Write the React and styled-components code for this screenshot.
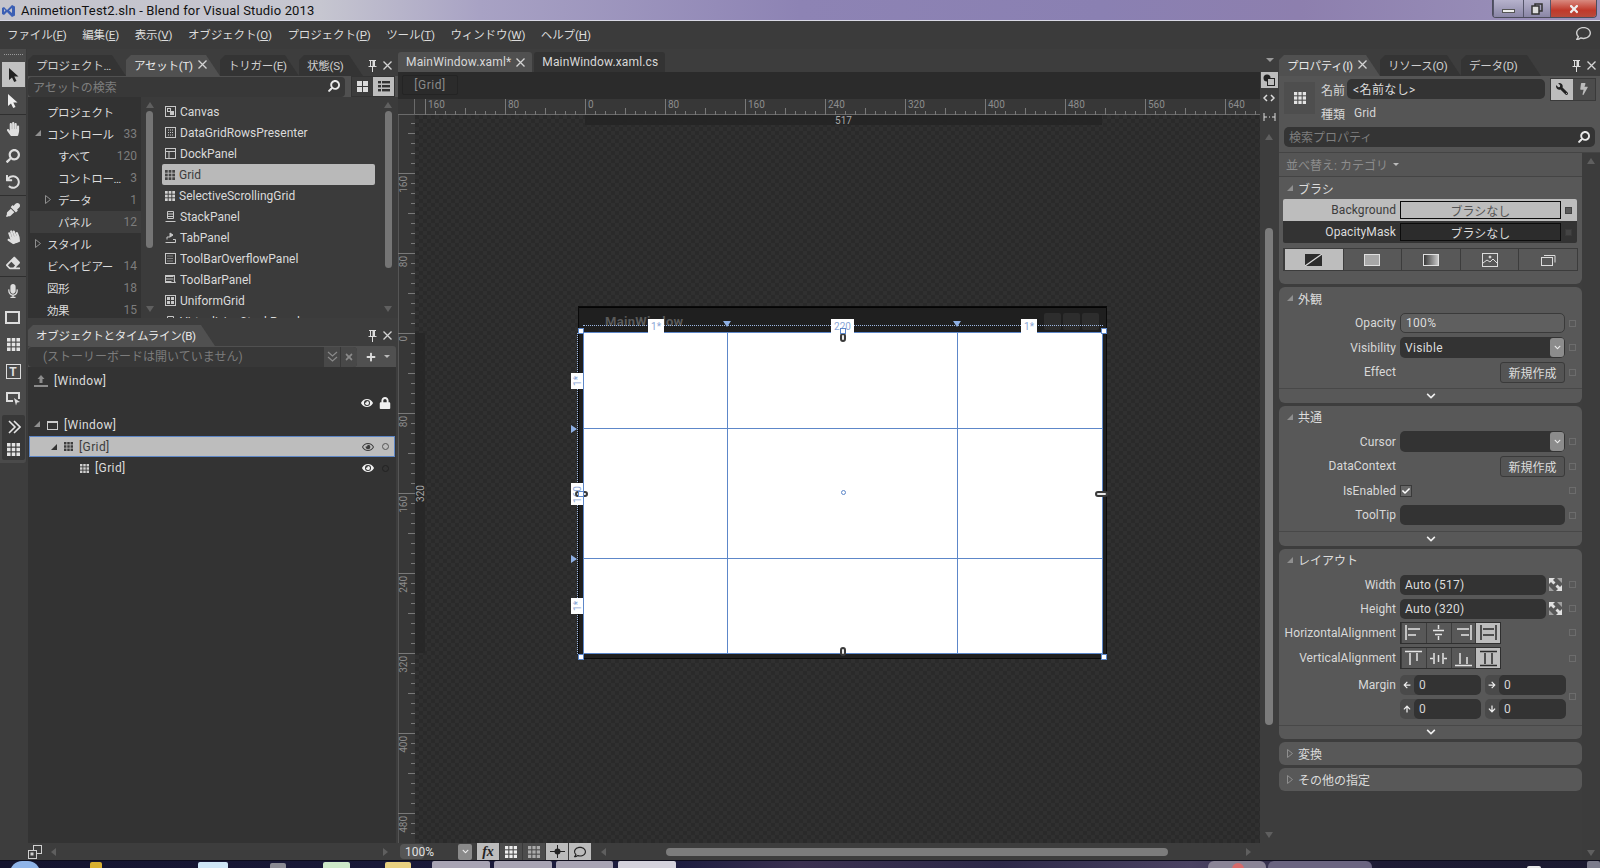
import React from 'react'
import styled, { createGlobalStyle, css } from 'styled-components'
import { FaHandPaper, FaSearch, FaEyeDropper, FaEraser, FaWrench, FaBolt, FaEye, FaLock, FaPlus, FaTimes, FaCheck, FaChevronDown, FaArrowLeft, FaArrowRight, FaArrowUp, FaArrowDown, FaRegComment, FaRegEye, FaUndo, FaMicrophone } from 'react-icons/fa'

const GlobalStyle = createGlobalStyle`
    html, body { margin: 0; padding: 0; height: 100%; overflow: hidden; background: #3c3c3c; }
    body { font-family: Roboto, "Noto Sans CJK JP", sans-serif; font-size: 12px; color: #d6d6d6; }
    * { box-sizing: border-box; }
`

const Page = styled.div`
    width: 1600px;
    height: 868px;
    display: flex;
    flex-direction: column;
    overflow: hidden;
`
const TitleBar = styled.div`
    height: 21px;
    flex: none;
    display: flex;
    align-items: flex-start;
    justify-content: space-between;
    border-bottom: 1px solid #d8d8e4;
    background: linear-gradient(90deg, #c4c4cc 0, #c6c6d0 320px, #a8a2c4 480px, #8d83b4 800px, #8a80b2 1100px, #8d7fae 1300px, #9c93bb 1600px);
`
const TitleLeft = styled.div`
    display: flex;
    align-items: center;
    height: 20px;
    gap: 4px;
    color: #111;
    font-size: 13px;
    letter-spacing: 0.16px;
`
const WindowControls = styled.div`
    display: flex;
    height: 18px;
    margin-right: 3px;
    border: 1px solid #4c4c5c;
    border-top: none;
    border-radius: 0 0 4px 4px;
    overflow: hidden;
`
const WindowButton = styled.div`
    width: ${p => p.$w}px;
    display: flex;
    align-items: center;
    justify-content: center;
    border-left: 1px solid #55556a;
    background: ${p => p.$close ? 'linear-gradient(#d98a80, #c0392b 60%, #b84a3c)' : 'linear-gradient(#b6b2cc, #8a86a6)'};
`
const MinBar = styled.div`
    width: 13px;
    height: 4px;
    margin-top: 4px;
    background: #eee;
    border: 1px solid #555;
`
const MenuBar = styled.div`
    height: 28px;
    flex: none;
    display: flex;
    align-items: center;
    justify-content: space-between;
    padding: 0 9px 3px 7px;
    background: #3b3b3b;
`
const MenuList = styled.div`
    display: flex;
    gap: 15.5px;
`
const MenuItem = styled.span`
    font-size: 11.5px;
    letter-spacing: -0.1px;
    color: #dcdcdc;
`
const Main = styled.div`
    flex: 1;
    display: flex;
    min-height: 0;
    background: #3d3d3d;
`
const Rail = styled.div`
    width: 28px;
    flex: none;
    display: flex;
    flex-direction: column;
`
const RailTools = styled.div`
    width: 27px;
    height: 414px;
    padding: 12px 0 0;
    background: #4a4a4a;
    border-right: 1px solid #3a3a3a;
    border-radius: 0 0 3px 0;
    position: relative;
`
const Grip = styled.div`
    position: absolute;
    top: 5px;
    left: 4px;
    width: 19px;
    border-top: 1px dotted #999;
`
const RailButton = styled.div`
    height: ${p => p.$h || 27}px;
    width: 26px;
    display: flex;
    align-items: center;
    justify-content: center;
    color: #dedede;
    font-size: 14px;
    ${p => p.$active && css`
        margin-top: 1px;
        height: 25px;
        margin-bottom: 1px;
        margin-left: 2px;
        width: 23px;
        background: #c2c2c2;
        color: #222;
    `}
    ${p => p.$sep && css`
        border-bottom: 1px solid #2f2f2f;
    `}
`
const RailGroup = styled.div`
    margin: 3px 1px 0 2px;
    width: 23px;
    height: 45px;
    background: #383838;
    border-radius: 2px;
    padding-top: 1px;
    ${RailButton} {
        width: 23px;
    }
`
const TextTool = styled.span`
    width: 15px;
    height: 15px;
    display: flex;
    align-items: center;
    justify-content: center;
    border: 1.5px solid #ddd;
    font-size: 12px;
    font-weight: 700;
    line-height: 1;
`
const LeftColumn = styled.div`
    width: 370px;
    flex: none;
    display: flex;
    flex-direction: column;
`
const TabStrip = styled.div`
    height: ${p => p.$h || 27}px;
    flex: none;
    display: flex;
    align-items: flex-end;
    gap: ${p => p.$gap ?? 0}px;
`
const Tab = styled.div`
    height: 21px;
    width: ${p => p.$w}px;
    flex: none;
    display: flex;
    align-items: center;
    gap: 5px;
    padding: 0 0 2px 8px;
    font-size: 11.5px;
    letter-spacing: -0.25px;
    white-space: nowrap;
    color: ${p => p.$active ? '#e8e8e8' : '#cfcfcf'};
    background: ${p => p.$active ? '#505050' : '#343434'};
    clip-path: polygon(0 5px, 5px 0, calc(100% - 14px) 0, 100% 100%, 0 100%);
`
const PaneButtons = styled.div`
    margin-left: auto;
    display: flex;
    align-items: center;
    gap: 6px;
    height: 21px;
    padding-right: ${p => p.$r ?? 6}px;
`
const SearchRow = styled.div`
    height: 21px;
    flex: none;
    display: flex;
    align-items: center;
    gap: 6px;
    padding: 0 3px 0 0;
    background: #505050;
`
const SearchBox = styled.div`
    flex: 1;
    height: 20px;
    display: flex;
    align-items: center;
    justify-content: space-between;
    padding: 0 5px 1px;
    background: #383838;
    border-radius: 4px;
    color: #7e7e7e;
    font-size: 12px;
`
const SearchIcon = styled(FaSearch)`
    color: #e8e8e8;
    font-size: 12px;
    transform: scaleX(-1);
`
const FlippedSearch = styled(FaSearch)`
    transform: scaleX(-1);
`
const TiltedHand = styled(FaHandPaper)`
    transform: rotate(-20deg);
`
const ViewToggle = styled.div`
    display: flex;
    border: 1px solid #333;
`
const ViewButton = styled.div`
    width: 21px;
    height: 19px;
    display: flex;
    align-items: center;
    justify-content: center;
    background: ${p => p.$on ? '#bdbdbd' : '#3c3c3c'};
`
const AssetsBody = styled.div`
    height: 221px;
    flex: none;
    display: flex;
    background: #3b3b3b;
`
const Tree = styled.div`
    width: 113px;
    flex: none;
    overflow: hidden;
    padding: 4px 0 0 2px;
    background: #323232;
`
const TreeRow = styled.div`
    height: 22px;
    display: flex;
    align-items: center;
    position: relative;
    padding-left: ${p => p.$indent}px;
    padding-right: 4px;
    font-size: 11.5px;
    letter-spacing: -0.4px;
    white-space: nowrap;
    color: #dcdcdc;
    ${p => p.$selected && css`
        background: #3e3e3e;
    `}
`
const Expander = styled.span`
    position: absolute;
    left: ${p => p.$x}px;
    top: 7px;
    width: 0;
    height: 0;
    border-left: 6px solid transparent;
    border-bottom: 6px solid ${p => p.$c || '#8f8f8f'};
`
const ClosedExpander = styled.span`
    position: absolute;
    left: ${p => p.$x}px;
    top: 4px;
`
const Count = styled.span`
    margin-left: auto;
    letter-spacing: 0;
    font-size: 12px;
    color: #7d7d7d;
`
const VScroll = styled.div`
    width: ${p => p.$w}px;
    flex: none;
    display: flex;
    flex-direction: column;
    align-items: center;
    justify-content: space-between;
    padding: 5px 0 6px;
`
const ArrowUp = styled.div`
    width: 0;
    height: 0;
    flex: none;
    border-left: 4px solid transparent;
    border-right: 4px solid transparent;
    border-bottom: 6px solid #5f5f5f;
`
const ArrowDown = styled(ArrowUp)`
    border-bottom: none;
    border-top: 6px solid #5f5f5f;
`
const Thumb = styled.div`
    width: 7px;
    height: ${p => p.$h}px;
    margin-top: 3px;
    margin-bottom: auto;
    border-radius: 4px;
    background: #757575;
`
const AssetList = styled.div`
    flex: 1;
    overflow: hidden;
    padding: 4px 0 0 4px;
`
const AssetRow = styled.div`
    width: 213px;
    height: 21px;
    display: flex;
    align-items: center;
    gap: 4px;
    padding-left: 3px;
    border-radius: 2px;
    font-size: 12px;
    color: ${p => p.$selected ? '#3c3c3c' : '#dadada'};
    background: ${p => p.$selected ? '#b9b9b9' : 'transparent'};
`
const ObjectsPane = styled.div`
    flex: 1;
    display: flex;
    flex-direction: column;
    min-height: 0;
`
const StoryRow = styled.div`
    height: 21px;
    flex: none;
    display: flex;
    align-items: center;
    gap: 9px;
    padding-right: 6px;
    background: #505050;
    border-radius: 3px 3px 0 0;
    margin-right: 2px;
`
const StoryBox = styled.div`
    flex: 1;
    height: 20px;
    display: flex;
    align-items: center;
    justify-content: space-between;
    padding-left: 15px;
    background: #383838;
    border-radius: 4px;
    color: #7c7c7c;
    overflow: hidden;
`
const StoryText = styled.span`
    margin-top: -3px;
`
const StoryButtons = styled.div`
    display: flex;
    height: 100%;
    color: #8a8a8a;
    font-size: 11px;
`
const StoryButton = styled.div`
    width: 16px;
    margin-left: 1px;
    display: flex;
    align-items: center;
    justify-content: center;
    background: #484848;
`
const StoryActions = styled.div`
    display: flex;
    align-items: center;
    gap: 8px;
    color: #ddd;
    font-size: 10px;
`
const SmallCaret = styled.span`
    width: 0;
    height: 0;
    border-left: 3px solid transparent;
    border-right: 3px solid transparent;
    border-top: 3px solid #bbb;
`
const ObjectTree = styled.div`
    flex: 1;
    background: #333333;
    margin-right: 2px;
    padding-top: 3px;
`
const ObjectRow = styled.div`
    height: ${p => p.$selected ? 21 : 22}px;
    display: flex;
    align-items: center;
    gap: 6px;
    position: relative;
    margin-left: ${p => p.$selected ? 1 : 0}px;
    margin-right: 1px;
    padding-left: ${p => p.$indent - (p.$selected ? 1 : 0)}px;
    padding-right: ${p => p.$selected ? 3 : 4}px;
    font-size: 12px;
    letter-spacing: 0.4px;
    color: ${p => p.$selected ? '#3c3c3c' : '#dcdcdc'};
    ${p => p.$selected && css`
        background: #bdbdbd;
        border: 1px solid #5d85c4;
    `}
`
const RowIcons = styled.div`
    margin-left: auto;
    display: flex;
    align-items: center;
    gap: 6px;
    font-size: 12px;
    color: ${p => p.$dark ? '#3c3c3c' : '#f0f0f0'};
`
const DotMark = styled.span`
    width: 7px;
    height: 7px;
    margin: 0 2px;
    border-radius: 50%;
    border: 1px solid ${p => p.$c};
`
const FootBar = styled.div`
    height: 17px;
    flex: none;
    display: flex;
    align-items: center;
    background: #3d3d3d;
`
const FootArrows = styled.div`
    flex: 1;
    display: flex;
    justify-content: space-between;
    padding: 0 10px 0 9px;
`
const ArrowLeftSmall = styled.div`
    width: 0;
    height: 0;
    border-top: 4px solid transparent;
    border-bottom: 4px solid transparent;
    border-right: 5px solid ${p => p.$c || '#5f5f5f'};
`
const ArrowRightSmall = styled.div`
    width: 0;
    height: 0;
    margin-left: ${p => p.$ml || 0}px;
    border-top: 4px solid transparent;
    border-bottom: 4px solid transparent;
    border-left: 5px solid ${p => p.$c || '#5f5f5f'};
`
const CenterColumn = styled.div`
    flex: 1;
    min-width: 0;
    display: flex;
    flex-direction: column;
`
const DocTab = styled.div`
    height: 20px;
    display: flex;
    align-items: center;
    gap: 5px;
    padding: 0 7px 0 8px;
    border-radius: 3px 3px 0 0;
    font-size: 12px;
    letter-spacing: 0.15px;
    color: #d8d8d8;
    background: ${p => p.$active ? '#505050' : '#333333'};
`
const Breadcrumb = styled.div`
    height: 27px;
    flex: none;
    padding: 3px 0 0 4px;
    background: #2b2b2b;
`
const CrumbButton = styled.div`
    width: 56px;
    height: 20px;
    display: flex;
    align-items: center;
    justify-content: center;
    border: 1px solid #242424;
    border-radius: 2px;
    color: #8a8a8a;
    font-size: 12px;
    letter-spacing: 0.5px;
`
const RulerTop = styled.svg`
    display: block;
    flex: none;
    background: #373737;
`
const Workspace = styled.div`
    flex: 1;
    display: flex;
    min-height: 0;
`
const RulerLeft = styled.svg`
    display: block;
    flex: none;
    background: #373737;
`
const Canvas = styled.div`
    flex: 1;
    position: relative;
    overflow: hidden;
    background-color: #2d2d2d;
    background-image: repeating-conic-gradient(#303030 0 25%, #2a2a2a 0 50%);
    background-size: 8px 8px;
`
const SizeBarH = styled.div`
    position: absolute;
    left: 170px;
    top: 0;
    width: 517px;
    height: 10px;
    display: flex;
    align-items: center;
    justify-content: center;
    background: #252525;
    color: #a8a8a8;
    font-size: 10px;
`
const SizeBarV = styled.div`
    position: absolute;
    left: 0;
    top: 218px;
    width: 10px;
    height: 320px;
    display: flex;
    align-items: center;
    justify-content: center;
    background: #272727;
    color: #a8a8a8;
    font-size: 10px;
`
const Vertical = styled.span`
    writing-mode: vertical-rl;
    transform: rotate(180deg);
`
const Artboard = styled.div`
    position: absolute;
    left: 164px;
    top: 192px;
    width: 527px;
    height: 351px;
    background: #1f1f1f;
    border-top: 1px solid #050505;
    box-shadow: 0 0 0 1px #0a0a0a;
`
const WinTitle = styled.div`
    position: absolute;
    left: 26px;
    top: 6px;
    color: #5a5a5a;
    font-size: 13px;
    font-weight: 700;
    letter-spacing: 0.3px;
`
const WinButton = styled.div`
    position: absolute;
    top: 5px;
    left: ${p => p.$x}px;
    width: 17px;
    height: 17px;
    background: #2d2d2d;
    border-radius: 2px;
`
const Surface = styled.div`
    position: absolute;
    left: 4px;
    top: 24px;
    width: 520px;
    height: 322px;
    background: #fff;
    border: 1px solid #5d87c9;
`
const GridLineV = styled.div`
    position: absolute;
    top: 0;
    bottom: 0;
    left: ${p => p.$x}px;
    width: 1px;
    background: #5d87c9;
`
const GridLineH = styled.div`
    position: absolute;
    left: 0;
    right: 0;
    top: ${p => p.$y}px;
    height: 1px;
    background: #5d87c9;
`
const DottedH = styled.div`
    position: absolute;
    left: 4px;
    width: 520px;
    top: 17px;
    border-top: 1px dotted #9db8e4;
`
const DottedV = styled.div`
    position: absolute;
    left: -2px;
    top: 25px;
    height: 321px;
    border-left: 1px dotted #9db8e4;
`
const SizeLabel = styled.div`
    position: absolute;
    left: ${p => p.$x}px;
    top: ${p => p.$y}px;
    width: ${p => p.$w}px;
    height: ${p => p.$h}px;
    display: flex;
    align-items: center;
    justify-content: center;
    background: #fff;
    color: #8ba6d6;
    font-size: 10px;
`
const Handle = styled.div`
    position: absolute;
    left: ${p => p.$x - 3}px;
    top: ${p => p.$y - 3}px;
    width: 6px;
    height: 6px;
    background: #fff;
    border: 1px solid #5d87c9;
`
const Grabber = styled.div`
    position: absolute;
    left: ${p => p.$x}px;
    top: ${p => p.$y}px;
    width: ${p => p.$w}px;
    height: ${p => p.$h}px;
    border-radius: 3px;
    background: #e8e8e8;
    border: 2px solid #3a3a3a;
`
const TriDown = styled.div`
    position: absolute;
    left: ${p => p.$x - 4}px;
    top: 13px;
    width: 0;
    height: 0;
    border-left: 4px solid transparent;
    border-right: 4px solid transparent;
    border-top: 6px solid #8fb0e4;
`
const TriRight = styled.div`
    position: absolute;
    left: -8px;
    top: ${p => p.$y - 4}px;
    width: 0;
    height: 0;
    border-top: 4px solid transparent;
    border-bottom: 4px solid transparent;
    border-left: 6px solid #8fb0e4;
`
const CenterDot = styled.div`
    position: absolute;
    left: 257px;
    top: 157px;
    width: 5px;
    height: 5px;
    border-radius: 50%;
    border: 1px solid #5d87c9;
`
const ZoomBox = styled.div`
    width: 24px;
    height: 15px;
    margin-left: 2px;
    display: flex;
    align-items: center;
    padding-left: 5px;
    border-radius: 4px;
    background: #555;
    color: #e0e0e0;
    font-size: 12px;
    white-space: nowrap;
`
const ZoomDrop = styled.div`
    width: 14px;
    height: 16px;
    margin-left: 34px;
    display: flex;
    align-items: center;
    justify-content: center;
    border-radius: 2px;
    background: #8a8a8a;
    color: #eee;
    font-size: 7px;
`
const ViewTools = styled.div`
    display: flex;
    margin-left: 4px;
    margin-right: 10px;
`
const ViewTool = styled.div`
    width: 23px;
    height: 17px;
    display: flex;
    align-items: center;
    justify-content: center;
    background: ${p => p.$on ? '#bcbcbc' : '#4c4c4c'};
    color: ${p => p.$on ? '#222' : '#eee'};
    font-family: "Liberation Serif", serif;
    font-style: italic;
    font-weight: 700;
    font-size: 14px;
    border-left: 1px solid #3a3a3a;
`
const HThumb = styled.div`
    width: 502px;
    height: 8px;
    margin-left: 60px;
    border-radius: 4px;
    background: #7c7c7c;
`
const SideStrip = styled.div`
    width: 18px;
    flex: none;
    margin-top: 23px;
    display: flex;
    flex-direction: column;
    align-items: center;
    position: relative;
    background: #3d3d3d;
    padding-bottom: 22px;
`
const SideButton = styled.div`
    width: 17px;
    height: ${p => p.$h}px;
    display: flex;
    align-items: center;
    justify-content: center;
    background: ${p => p.$on ? '#bdbdbd' : 'transparent'};
`
const SideCaret = styled.span`
    position: absolute;
    right: 4px;
    top: -14px;
    width: 0;
    height: 0;
    border-left: 4px solid transparent;
    border-right: 4px solid transparent;
    border-top: 4px solid #999;
`
const SideUp = styled(ArrowUp)`
    margin-top: 9px;
`
const SideDown = styled(ArrowDown)`
    margin-top: auto;
`
const SideThumb = styled.div`
    width: 8px;
    height: 497px;
    margin-top: 88px;
    border-radius: 4px;
    background: #7c7c7c;
`
const RightColumn = styled.div`
    width: 322px;
    flex: none;
    display: flex;
    flex-direction: column;
    padding-left: 1px;
`
const HeadBlock = styled.div`
    height: 77px;
    flex: none;
    display: flex;
    flex-direction: column;
    background: #555555;
    padding: 2px 5px 0;
    border-bottom: 1px solid #444;
`
const NameArea = styled.div`
    display: flex;
    height: 45px;
`
const TypeTile = styled.div`
    width: 31px;
    height: 32px;
    margin-top: 4px;
    flex: none;
    display: flex;
    align-items: center;
    justify-content: center;
    background: #4e4e4e;
`
const NameFields = styled.div`
    flex: 1;
    min-width: 0;
    padding-left: 6px;
`
const NameRow = styled.div`
    display: flex;
    align-items: center;
    height: 22px;
    gap: ${p => p.$gap}px;
    margin-bottom: 2px;
    white-space: nowrap;
`
const NameInput = styled.div`
    width: 198px;
    height: 20px;
    flex: none;
    display: flex;
    align-items: center;
    padding: 0 0 2px 6px;
    border-radius: 5px;
    background: #333;
    color: #dcdcdc;
    letter-spacing: 0.4px;
`
const ModeButtons = styled.div`
    display: flex;
    flex: none;
    margin-left: 3px;
    border: 1px solid #3a3a3a;
`
const ModeButton = styled.div`
    width: 22px;
    height: 21px;
    display: flex;
    align-items: center;
    justify-content: center;
    font-size: 12px;
    color: ${p => p.$on ? '#222' : '#bbb'};
    background: ${p => p.$on ? '#bdbdbd' : '#4c4c4c'};
`
const FlippedWrench = styled(FaWrench)`
    transform: scaleX(-1);
`
const PropSearch = styled(SearchBox)`
    flex: none;
    height: 20px;
    margin-top: 4px;
    border-radius: 5px;
    background: #343434;
`
const PropBody = styled.div`
    flex: 1;
    display: flex;
    min-height: 0;
`
const Sections = styled.div`
    width: 303px;
    flex: none;
    display: flex;
    flex-direction: column;
`
const SortRow = styled.div`
    height: 24px;
    flex: none;
    display: flex;
    align-items: center;
    gap: 5px;
    padding-left: 7px;
    background: #555555;
    color: #8d8d8d;
    border-bottom: 1px solid #444;
`
const Section = styled.div`
    flex: none;
    margin-bottom: 3px;
    background: #585858;
    border-radius: ${p => p.$flat ? '0 0 6px 6px' : '6px'};
    overflow: hidden;
`
const SectionTitle = styled.div`
    height: ${p => p.$h || 22}px;
    display: flex;
    align-items: center;
    gap: 5px;
    padding-left: 8px;
    color: #dcdcdc;
    font-size: 12px;
`
const TinyOpen = styled.span`
    width: 0;
    height: 0;
    border-left: 6px solid transparent;
    border-bottom: 6px solid #8f8f8f;
`
const BrushRow = styled.div`
    width: 294px;
    height: 22px;
    margin-left: 4px;
    display: grid;
    grid-template-columns: 113px 161px 8px;
    column-gap: 4px;
    align-items: center;
    background: ${p => p.$on ? '#bdbdbd' : '#333'};
    color: ${p => p.$on ? '#3c3c3c' : '#dcdcdc'};
    border-radius: ${p => p.$on ? '2px 2px 0 0' : '0 0 2px 2px'};
`
const BrushLabel = styled.span`
    text-align: right;
    letter-spacing: 0.1px;
`
const BrushSwatch = styled.div`
    height: 18px;
    display: flex;
    align-items: center;
    justify-content: center;
    border: 1px solid #0c0c0c;
    background: ${p => p.$on ? '#bdbdbd' : '#2c2c2c'};
    color: ${p => p.$on ? '#555' : '#dcdcdc'};
`
const BrushDot = styled.span`
    width: 7px;
    height: 7px;
    background: ${p => p.$on ? '#5a5a5a' : '#444'};
    border: 1px solid ${p => p.$on ? '#444' : '#3a3a3a'};
`
const BrushTabs = styled.div`
    width: 295px;
    height: 23px;
    margin: 5px 0 13px 4px;
    display: grid;
    grid-template-columns: repeat(5, 1fr);
    border: 1px solid #3c3c3c;
`
const BrushTab = styled.div`
    display: flex;
    align-items: center;
    justify-content: center;
    background: ${p => p.$on ? '#bdbdbd' : 'transparent'};
    border-left: 1px solid #3c3c3c;
`
const PropRows = styled.div`
    padding-top: 2px;
`
const PropRow = styled.div`
    height: ${p => p.$h || 24.5}px;
    display: grid;
    grid-template-columns: 117px 165px 7px;
    column-gap: 4px;
    align-items: center;
`
const PropLabel = styled.span`
    text-align: right;
    white-space: nowrap;
    color: #d8d8d8;
    font-size: 12px;
    letter-spacing: 0.1px;
`
const Marker = styled.span`
    width: 7px;
    height: 7px;
    border: 1px solid #6c6c6c;
    ${p => p.$tall && css`
        transform: translateY(12px);
    `}
`
const Field = styled.div`
    height: 20px;
    display: flex;
    align-items: center;
    padding-left: 5px;
    border-radius: 5px;
    color: #dcdcdc;
    letter-spacing: 0.3px;
    background: ${p => p.$light ? '#5f5f5f' : '#333'};
    border: ${p => p.$light ? '1px solid #3a3a3a' : 'none'};
`
const SelectField = styled(Field)`
    height: 21px;
    padding-right: 1px;
    justify-content: space-between;
`
const SelectCaret = styled.span`
    width: 14px;
    height: 19px;
    display: flex;
    align-items: center;
    justify-content: center;
    border-radius: 3px;
    background: #8c8c8c;
    color: #eee;
    font-size: 7px;
`
const NewButton = styled.div`
    width: 65px;
    height: 21px;
    margin-left: auto;
    display: flex;
    align-items: center;
    justify-content: center;
    border: 1px solid #3a3a3a;
    border-radius: 3px;
    color: #dcdcdc;
    background: #545454;
`
const CheckBox = styled.span`
    width: 12px;
    height: 12px;
    display: flex;
    align-items: center;
    justify-content: center;
    border: 1px solid #3a3a3a;
    background: #666;
    color: #fff;
    font-size: 8px;
`
const SizeEditor = styled.div`
    display: flex;
    align-items: center;
    justify-content: space-between;
    padding-right: 3px;
`
const SizeField = styled(Field)`
    width: 146px;
`
const AlignGroup = styled.div`
    width: 101px;
    height: 22px;
    display: grid;
    grid-template-columns: repeat(4, 1fr);
    border: 1px solid #2f2f2f;
`
const AlignCell = styled.div`
    display: flex;
    align-items: center;
    justify-content: center;
    background: ${p => p.$on ? '#bdbdbd' : 'transparent'};
    border-left: 1px solid #3c3c3c;
`
const MarginGrid = styled.div`
    display: grid;
    grid-template-columns: 81px 81px;
    column-gap: 4px;
`
const MarginCell = styled.div`
    height: 20px;
    display: flex;
    border-radius: 5px;
    overflow: hidden;
    background: #4a4a4a;
`
const MarginArrow = styled.div`
    width: 14px;
    display: flex;
    align-items: center;
    justify-content: center;
    color: #eee;
    font-size: 8px;
`
const MarginInput = styled.div`
    flex: 1;
    display: flex;
    align-items: center;
    padding-left: 5px;
    border-radius: 5px;
    background: #333;
`
const MoreRow = styled.div`
    height: ${p => p.$h || 15}px;
    margin-top: ${p => p.$mt || 0}px;
    display: flex;
    align-items: center;
    justify-content: center;
    border-top: 1px solid #484848;
    color: #eee;
    font-size: 10px;
`
const PropScroll = styled.div`
    flex: 1;
    padding: 5px 0 4px;
    display: flex;
    flex-direction: column;
    align-items: center;
    justify-content: space-between;
    background: #3c3c3c;
`
const Taskbar = styled.div`
    height: 8px;
    flex: none;
    position: relative;
    overflow: hidden;
    background: linear-gradient(90deg, #14142e 0, #1d1d40 680px, #3a3050 800px, #2c2848 1000px, #4a4262 1190px, #1d1b34 1380px, #1b1a30 1600px);
    border-top: 1px solid #0d0d1c;
`
const TaskItem = styled.div`
    position: absolute;
    left: ${p => p.$x}px;
    width: ${p => p.$w}px;
    top: ${p => p.$t ?? 0}px;
    height: 12px;
    border-radius: ${p => p.$r ?? 2}px ${p => p.$r ?? 2}px 0 0;
    background: ${p => p.$c};
`

const Cursor = ({ filled = true, c = '#222' }) => (
    <svg width="12" height="16" viewBox="0 0 12 16"><path d="M1 1 L1 13 L4 10.5 L6.2 15 L8.5 14 L6.3 9.5 L10.5 9.5 Z" fill={filled ? c : '#eee'} /></svg>
)

const Pin = () => (
    <svg width="9" height="12" viewBox="0 0 9 12" fill="none" stroke="#ddd"><path d="M1 .5h7M2.500 .5v6M6.500 .5v6M.5 6.500h8M4.500 6.500V12" /><rect x="4.500" y="1" width="2" height="5" fill="#ddd" stroke="none" /></svg>
)

const Cross = ({ c = '#d4d4d4' }) => (
    <svg width="9" height="9" viewBox="0 0 9 9" stroke={c} strokeWidth="1.300"><path d="M.5 .5l8 8M8.500 .5l-8 8" /></svg>
)

const OutlineArrow = () => (
    <svg width="6" height="9" viewBox="0 0 6 9" fill="none" stroke="#8f8f8f"><path d="M.5 .5l5 4-5 4z" /></svg>
)

const Dots = ({ c = '#dcdcdc', s = 11 }) => (
    <svg width={s} height={s} viewBox="0 0 11 11" fill={c}>
        {[0, 4, 8].map(y => [0, 4, 8].map(x => <rect key={`${x}-${y}`} x={x} y={y} width="3" height="3" />))}
    </svg>
)

const TwoByTwo = ({ c }) => (
    <svg width="11" height="11" viewBox="0 0 11 11" fill={c}>
        <rect width="5" height="5" /><rect x="6" width="5" height="5" /><rect y="6" width="5" height="5" /><rect x="6" y="6" width="5" height="5" />
    </svg>
)

const ListIcon = ({ c }) => (
    <svg width="12" height="11" viewBox="0 0 12 11" fill={c}>
        {[0, 4, 8].map(y => <g key={y}><rect y={y} width="3" height="2.400" /><rect x="4" y={y} width="8" height="2.400" /></g>)}
    </svg>
)

const ExpandIcon = () => (
    <svg width="13" height="13" viewBox="0 0 13 13">
        <path d="M0 0h6L4 2l2.500 2.500-2 2L2 4 0 6zM13 13H7l2-2-2.500-2.500 2-2L11 9l2-2z" fill="#e0e0e0" />
        <path d="M8 0h5v5zM0 8l5 5H0z" fill="#a0a0a0" />
    </svg>
)

const DoubleChevron = () => (
    <svg width="11" height="11" viewBox="0 0 11 11" fill="none" stroke="#8a8a8a" strokeWidth="1.200"><path d="M1 1l4.500 4L10 1M1 6l4.500 4L10 6" /></svg>
)

const AssetIcon = ({ kind, c = '#c8c8c8' }) => {
    const common = { width: 11, height: 11, viewBox: '0 0 11 11', fill: 'none', stroke: c, strokeWidth: 1 }
    if (kind === 'grid') return <Dots c={c === '#c8c8c8' ? '#d0d0d0' : c} s={10} />
    if (kind === 'canvas') return <svg {...common}><rect x=".5" y=".5" width="10" height="10" /><rect x="2.500" y="2.500" width="3" height="3" /><rect x="5.500" y="5.500" width="3" height="3" fill={c} /></svg>
    if (kind === 'rows') return <svg {...common}><rect x=".5" y=".5" width="10" height="10" /><path d="M3 3h5M3 5.500h5M3 8h5" strokeDasharray="1 1" /></svg>
    if (kind === 'dock') return <svg {...common}><rect x=".5" y=".5" width="10" height="10" /><path d="M.5 3.500h10M4 3.500v7" /></svg>
    if (kind === 'stack') return <svg {...common}><path d="M2.500 .5h6v7h-6zM2.500 3h6M2.500 5.500h6M.5 10.500h10" /></svg>
    if (kind === 'tab') return <svg {...common}><path d="M.5 10.500h10V7.500H8M2 7.500V5h3" /><path d="M5 1l3 2-3 2z" fill={c} /></svg>
    if (kind === 'overflow') return <svg {...common}><rect x=".5" y=".5" width="10" height="10" /><path d="M2.500 3h6M2.500 5.500h6M2.500 8h6" strokeDasharray="1 1" /></svg>
    if (kind === 'toolbar') return <svg {...common}><path d="M.5 2.500h8M.5 5h8M.5 7.500h6M9 6l1.500 3" /><rect x=".5" y="1.500" width="9" height="7" /></svg>
    return <svg {...common}><rect x=".5" y=".5" width="10" height="10" /><rect x="2.500" y="2.500" width="2" height="2" fill={c} /><rect x="6.500" y="2.500" width="2" height="2" fill={c} /><rect x="2.500" y="6.500" width="2" height="2" fill={c} /><rect x="6.500" y="6.500" width="2" height="2" fill={c} /></svg>
}

const ticks = (from, to) => {
    const out = []
    for (let u = from; u <= to; u += 10) out.push(u)
    return out
}

const HorizontalRuler = () => {
    const origin = 187
    const marks = ticks(-160, 670)
    return (
        <RulerTop width="862" height="16" viewBox="0 0 862 16">
            <line x1="0" x2="862" y1="15.500" y2="15.500" stroke="#6a6a6a" />
            <line x1="16.500" x2="16.500" y1="0" y2="16" stroke="#6a6a6a" />
            {marks.map(u => {
                const major = u % 80 === 0
                const h = major ? 16 : u % 40 === 0 ? 7 : 4
                return <line key={u} x1={origin + u + 0.5} x2={origin + u + 0.5} y1={16 - h} y2="16" stroke="#787878" />
            })}
            {marks.filter(u => u % 80 === 0).map(u => (
                <text key={u} x={origin + u + 3} y="9" fill="#8c8c8c" fontSize="10" fontFamily="Roboto, sans-serif">{Math.abs(u)}</text>
            ))}
        </RulerTop>
    )
}

const VerticalRuler = () => {
    const origin = 218
    const marks = ticks(-210, 500)
    return (
        <RulerLeft width="17" height="728" viewBox="0 0 17 728">
            <line x1="0.5" x2="0.5" y1="0" y2="728" stroke="#555" />
            {marks.map(u => {
                const major = u % 80 === 0
                const w = major ? 17 : u % 40 === 0 ? 7 : 4
                return <line key={u} x1={17 - w} x2="17" y1={origin + u + 0.5} y2={origin + u + 0.5} stroke="#787878" />
            })}
            {marks.filter(u => u % 80 === 0).map(u => (
                <text key={u} transform={`translate(9 ${origin + u + 3 + String(Math.abs(u)).length * 5.6}) rotate(-90)`} fill="#8c8c8c" fontSize="10" fontFamily="Roboto, sans-serif">{Math.abs(u)}</text>
            ))}
        </RulerLeft>
    )
}

const BrushIcon = ({ kind }) => {
    if (kind === 0) return <svg width="17" height="12" viewBox="0 0 17 12"><rect width="17" height="12" fill="#2c2c2c" /><path d="M0 12 L17 0" stroke="#dcdcdc" strokeWidth="1.200" /></svg>
    if (kind === 1) return <svg width="16" height="12" viewBox="0 0 16 12"><rect x=".5" y=".5" width="15" height="11" fill="#a8a8a8" stroke="#e0e0e0" /></svg>
    if (kind === 2) return <svg width="16" height="12" viewBox="0 0 16 12"><defs><linearGradient id="gr"><stop offset="0" stopColor="#333" /><stop offset="1" stopColor="#ccc" /></linearGradient></defs><rect x=".5" y=".5" width="15" height="11" fill="url(#gr)" stroke="#e0e0e0" /></svg>
    if (kind === 3) return <svg width="16" height="14" viewBox="0 0 16 14" fill="none" stroke="#dcdcdc"><rect x=".5" y=".5" width="15" height="13" /><path d="M1 10l4-3 3 2 3-3 4 4" /><circle cx="8" cy="4" r="1" fill="#dcdcdc" /></svg>
    return <svg width="15" height="12" viewBox="0 0 15 12" fill="none" stroke="#dcdcdc"><rect x=".5" y="3.500" width="11" height="8" /><path d="M3 1.500h11v7" /></svg>
}

const AlignIcon = ({ d, dark }) => (
    <svg width="19" height="17" viewBox="0 0 19 17" fill="none" stroke={dark ? '#2a2a2a' : '#e4e4e4'} strokeWidth="1.500"><path d={d} /></svg>
)

const horizontalIcons = [
    'M2 1v15M4 5h12M4 11h8',
    'M9.500 1v4M9.500 12v4M4 6.500h11M6 10.500h7',
    'M17 1v15M3 5h12M7 11h8',
    'M2 1v15M17 1v15M4 5h11M4 11h11',
]
const verticalIcons = [
    'M1 1.500h17M6 3v12M13 3v8',
    'M5 3v11M9.500 5v7M14 3v11M1 8.500h3M15 8.500h3',
    'M1 15.500h17M6 14V3M13 14V7',
    'M1 1.500h17M1 15.500h17M6 3v11M13 3v11',
]

const menus = [['ファイル', 'F'], ['編集', 'E'], ['表示', 'V'], ['オブジェクト', 'O'], ['プロジェクト', 'P'], ['ツール', 'T'], ['ウィンドウ', 'W'], ['ヘルプ', 'H']]

const categories = [
    { label: 'プロジェクト', indent: 17 },
    { label: 'コントロール', indent: 17, count: 33, open: true, ax: 5 },
    { label: 'すべて', indent: 28, count: 120 },
    { label: 'コントロー…', indent: 28, count: 3 },
    { label: 'データ', indent: 28, count: 1, closed: true, ax: 15 },
    { label: 'パネル', indent: 28, count: 12, selected: true },
    { label: 'スタイル', indent: 17, closed: true, ax: 5 },
    { label: 'ビヘイビアー', indent: 17, count: 14 },
    { label: '図形', indent: 17, count: 18 },
    { label: '効果', indent: 17, count: 15 },
]

const assets = [
    ['Canvas', 'canvas'], ['DataGridRowsPresenter', 'rows'], ['DockPanel', 'dock'], ['Grid', 'grid'],
    ['SelectiveScrollingGrid', 'grid'], ['StackPanel', 'stack'], ['TabPanel', 'tab'], ['ToolBarOverflowPanel', 'overflow'],
    ['ToolBarPanel', 'toolbar'], ['UniformGrid', 'uniform'], ['VirtualizingStackPanel', 'stack'],
]

const App = () => {
    return (
        <Page>
            <GlobalStyle />
            <TitleBar>
                <TitleLeft>
                    <svg width="17" height="15" viewBox="0 0 15 15"><path d="M1 5l2-1 3 3 5-5 3 1.500v9L11 14 6 9l-3 3-2-1zM3 6v3l1.500-1.500zM11 5l-3 2.500L11 10z" fill="#3b5fb4" /></svg>
                    AnimetionTest2.sln - Blend for Visual Studio 2013
                </TitleLeft>
                <WindowControls>
                    <WindowButton $w={30}><MinBar /></WindowButton>
                    <WindowButton $w={27}>
                        <svg width="12" height="12" viewBox="0 0 12 12" fill="none" stroke="#333" strokeWidth="1.500"><rect x="1" y="3" width="7" height="8" fill="#ddd" /><path d="M4 3V1h7v7H8" /></svg>
                    </WindowButton>
                    <WindowButton $w={46} $close><FaTimes color="#eee" size={12} /></WindowButton>
                </WindowControls>
            </TitleBar>
            <MenuBar>
                <MenuList>
                    {menus.map(([name, key]) => <MenuItem key={key}>{name}(<u>{key}</u>)</MenuItem>)}
                </MenuList>
                <FaRegComment color="#cfcfcf" size={15} />
            </MenuBar>
            <Main>
                <Rail>
                    <RailTools>
                        <Grip />
                        <RailButton $active><Cursor /></RailButton>
                        <RailButton $sep><Cursor filled={false} /></RailButton>
                        <RailButton><FaHandPaper /></RailButton>
                        <RailButton><FlippedSearch /></RailButton>
                        <RailButton $sep><FaUndo /></RailButton>
                        <RailButton><FaEyeDropper /></RailButton>
                        <RailButton><TiltedHand /></RailButton>
                        <RailButton $sep><FaEraser /></RailButton>
                        <RailButton><FaMicrophone /></RailButton>
                        <RailButton>
                            <svg width="16" height="14" viewBox="0 0 16 14" fill="none" stroke="#ddd" strokeWidth="2"><rect x="1" y="1" width="13" height="11" /></svg>
                        </RailButton>
                        <RailButton><Dots c="#e4e4e4" s={13} /></RailButton>
                        <RailButton><TextTool>T</TextTool></RailButton>
                        <RailButton>
                            <svg width="16" height="15" viewBox="0 0 16 15" fill="none" stroke="#ddd" strokeWidth="2"><path d="M14 8V2H2v8h6" /><path d="M9 7l6 4-3 .5-1 3z" fill="#ddd" stroke="none" /></svg>
                        </RailButton>
                        <RailGroup>
                            <RailButton $h={22}>
                                <svg width="14" height="14" viewBox="0 0 14 14" fill="none" stroke="#e4e4e4" strokeWidth="1.600"><path d="M2 1l6 6-6 6M7 1l6 6-6 6" /></svg>
                            </RailButton>
                            <RailButton $h={22}><Dots c="#e4e4e4" s={13} /></RailButton>
                        </RailGroup>
                    </RailTools>
                </Rail>
                <LeftColumn>
                    <TabStrip>
                        <Tab $w={98}>プロジェクト…</Tab>
                        <Tab $w={94} $active>アセット(T)<Cross /></Tab>
                        <Tab $w={79}>トリガー(E)</Tab>
                        <Tab $w={64}>状態(S)</Tab>
                        <PaneButtons><Pin /><Cross /></PaneButtons>
                    </TabStrip>
                    <SearchRow>
                        <SearchBox>アセットの検索<SearchIcon /></SearchBox>
                        <ViewToggle>
                            <ViewButton><TwoByTwo c="#ddd" /></ViewButton>
                            <ViewButton $on><ListIcon c="#333" /></ViewButton>
                        </ViewToggle>
                    </SearchRow>
                    <AssetsBody>
                        <Tree>
                            {categories.map(c => (
                                <TreeRow key={c.label} $indent={c.indent} $selected={c.selected}>
                                    {c.open && <Expander $x={c.ax} />}
                                    {c.closed && <ClosedExpander $x={c.ax}><OutlineArrow /></ClosedExpander>}
                                    {c.label}
                                    {c.count && <Count>{c.count}</Count>}
                                </TreeRow>
                            ))}
                        </Tree>
                        <VScroll $w={17}><ArrowUp /><Thumb $h={137} /><ArrowDown /></VScroll>
                        <AssetList>
                            {assets.map(([name, kind]) => (
                                <AssetRow key={name} $selected={name === 'Grid'}>
                                    <AssetIcon kind={kind} c={name === 'Grid' ? '#444' : '#c8c8c8'} />
                                    {name}
                                </AssetRow>
                            ))}
                        </AssetList>
                        <VScroll $w={20}><ArrowUp /><Thumb $h={157} /><ArrowDown /></VScroll>
                    </AssetsBody>
                    <TabStrip $h={28}>
                        <Tab $w={187} $active>オブジェクトとタイムライン(B)</Tab>
                        <PaneButtons><Pin /><Cross /></PaneButtons>
                    </TabStrip>
                    <ObjectsPane>
                        <StoryRow>
                            <StoryBox>
                                <StoryText>(ストーリーボードは開いていません)</StoryText>
                                <StoryButtons>
                                    <StoryButton><DoubleChevron /></StoryButton>
                                    <StoryButton><FaTimes size={10} /></StoryButton>
                                </StoryButtons>
                            </StoryBox>
                            <StoryActions><FaPlus /><SmallCaret /></StoryActions>
                        </StoryRow>
                        <ObjectTree>
                            <ObjectRow $indent={6}>
                                <svg width="14" height="12" viewBox="0 0 14 12" fill="#8c8c8c"><path d="M7 0l3.500 4H8.500v4h-3V4H3.500zM0 10h14v2H0z" /></svg>
                                [Window]
                            </ObjectRow>
                            <ObjectRow $indent={6}>
                                <RowIcons><FaEye /><FaLock /></RowIcons>
                            </ObjectRow>
                            <ObjectRow $indent={19}>
                                <Expander $x={6} />
                                <svg width="11" height="9" viewBox="0 0 11 9" fill="none" stroke="#ccc"><rect x=".5" y=".5" width="10" height="8" /><path d="M.5 1.500h10" /></svg>
                                [Window]
                            </ObjectRow>
                            <ObjectRow $indent={35} $selected>
                                <Expander $x={21} $c="#333" />
                                <Dots c="#3c3c3c" s={9} />
                                [Grid]
                                <RowIcons $dark><FaRegEye /><DotMark $c="#555" /></RowIcons>
                            </ObjectRow>
                            <ObjectRow $indent={52}>
                                <Dots c="#cfcfcf" s={9} />
                                [Grid]
                                <RowIcons><FaEye /><DotMark $c="#222" /></RowIcons>
                            </ObjectRow>
                        </ObjectTree>
                    </ObjectsPane>
                    <FootBar>
                        <svg width="14" height="14" viewBox="0 0 14 14" fill="none" stroke="#d0d0d0"><rect x="5.500" y=".5" width="8" height="8" /><rect x=".5" y="5.500" width="8" height="8" fill="#3d3d3d" /><rect x="3" y="8" width="2" height="2" fill="#d0d0d0" /></svg>
                        <FootArrows>
                            <ArrowLeftSmall /><ArrowRightSmall />
                        </FootArrows>
                    </FootBar>
                </LeftColumn>
                <CenterColumn>
                    <TabStrip $h={23} $gap={2}>
                        <DocTab $active>MainWindow.xaml*<Cross /></DocTab>
                        <DocTab>MainWindow.xaml.cs</DocTab>
                    </TabStrip>
                    <Breadcrumb><CrumbButton>[Grid]</CrumbButton></Breadcrumb>
                    <HorizontalRuler />
                    <Workspace>
                        <VerticalRuler />
                        <Canvas>
                            <SizeBarH>517</SizeBarH>
                            <SizeBarV><Vertical>320</Vertical></SizeBarV>
                            <Artboard>
                                <WinTitle>MainWindow</WinTitle>
                                <WinButton $x={465} />
                                <WinButton $x={484} />
                                <WinButton $x={503} />
                                <DottedH />
                                <DottedV />
                                <Surface>
                                    <GridLineV $x={143} />
                                    <GridLineV $x={373} />
                                    <GridLineH $y={95} />
                                    <GridLineH $y={225} />
                                    <CenterDot />
                                </Surface>
                                <TriDown $x={148} />
                                <TriDown $x={378} />
                                <TriRight $y={121} />
                                <TriRight $y={251} />
                                <SizeLabel $x={69} $y={11} $w={16} $h={14}>1*</SizeLabel>
                                <SizeLabel $x={252} $y={11} $w={23} $h={14}>220</SizeLabel>
                                <SizeLabel $x={442} $y={11} $w={16} $h={14}>1*</SizeLabel>
                                <SizeLabel $x={-8} $y={65} $w={12} $h={16}><Vertical>1*</Vertical></SizeLabel>
                                <SizeLabel $x={-8} $y={175} $w={12} $h={22}><Vertical>160</Vertical></SizeLabel>
                                <SizeLabel $x={-8} $y={290} $w={12} $h={16}><Vertical>1*</Vertical></SizeLabel>
                                <Grabber $x={261} $y={25} $w={6} $h={9} />
                                <Grabber $x={261} $y={339} $w={6} $h={9} />
                                <Grabber $x={-4} $y={183} $w={13} $h={6} />
                                <Grabber $x={516} $y={183} $w={13} $h={6} />
                                <Handle $x={2} $y={23} />
                                <Handle $x={525} $y={23} />
                                <Handle $x={2} $y={349} />
                                <Handle $x={525} $y={349} />
                                <Handle $x={264} $y={23} />
                                <Handle $x={2} $y={186} />
                            </Artboard>
                        </Canvas>
                    </Workspace>
                    <FootBar>
                        <ZoomBox>100%</ZoomBox>
                        <ZoomDrop><FaChevronDown /></ZoomDrop>
                        <ViewTools>
                            <ViewTool $on>fx</ViewTool>
                            <ViewTool><Dots c="#eee" s={12} /></ViewTool>
                            <ViewTool><Dots c="#aaa" s={12} /></ViewTool>
                            <ViewTool $on>
                                <svg width="15" height="13" viewBox="0 0 15 13" fill="#222"><circle cx="7.500" cy="6.500" r="3" /><path d="M0 6h15v1H0zM7 0h1v13H7z" /></svg>
                            </ViewTool>
                            <ViewTool $on><FaRegComment size={12} /></ViewTool>
                        </ViewTools>
                        <ArrowLeftSmall />
                        <HThumb />
                        <ArrowRightSmall $ml={78} />
                    </FootBar>
                </CenterColumn>
                <SideStrip>
                    <SideCaret />
                    <SideButton $h={16} $on>
                        <svg width="12" height="12" viewBox="0 0 12 12"><circle cx="4" cy="4" r="3.500" fill="#222" /><rect x="4.500" y="4.500" width="7" height="7" fill="#bdbdbd" stroke="#222" /></svg>
                    </SideButton>
                    <SideButton $h={20}>
                        <svg width="12" height="8" viewBox="0 0 12 8" fill="none" stroke="#ddd" strokeWidth="1.500"><path d="M4 1L1 4l3 3M8 1l3 3-3 3" /></svg>
                    </SideButton>
                    <SideButton $h={17}>
                        <svg width="13" height="8" viewBox="0 0 13 8" fill="none" stroke="#ddd"><path d="M1 0v8M12 0v8M1 4h3M6 4h1M9 4h3" /></svg>
                    </SideButton>
                    <SideUp />
                    <SideThumb />
                    <SideDown />
                </SideStrip>
                <RightColumn>
                    <TabStrip>
                        <Tab $w={101} $active>プロパティ(I)<Cross /></Tab>
                        <Tab $w={81}>リソース(O)</Tab>
                        <Tab $w={80}>データ(D)</Tab>
                        <PaneButtons $r={4}><Pin /><Cross /></PaneButtons>
                    </TabStrip>
                    <HeadBlock>
                        <NameArea>
                            <TypeTile><Dots c="#e4e4e4" s={12} /></TypeTile>
                            <NameFields>
                                <NameRow $gap={2}>
                                    名前
                                    <NameInput>&lt;名前なし&gt;</NameInput>
                                    <ModeButtons>
                                        <ModeButton $on><FlippedWrench /></ModeButton>
                                        <ModeButton><FaBolt /></ModeButton>
                                    </ModeButtons>
                                </NameRow>
                                <NameRow $gap={9}>種類 <span>Grid</span></NameRow>
                            </NameFields>
                        </NameArea>
                        <PropSearch>検索プロパティ<SearchIcon /></PropSearch>
                    </HeadBlock>
                    <PropBody>
                        <Sections>
                            <SortRow>並べ替え: カテゴリ <SmallCaret /></SortRow>
                            <Section $flat>
                                <SectionTitle>
                                    <TinyOpen />ブラシ
                                </SectionTitle>
                                <BrushRow $on>
                                    <BrushLabel>Background</BrushLabel>
                                    <BrushSwatch $on>ブラシなし</BrushSwatch>
                                    <BrushDot $on />
                                </BrushRow>
                                <BrushRow>
                                    <BrushLabel>OpacityMask</BrushLabel>
                                    <BrushSwatch>ブラシなし</BrushSwatch>
                                    <BrushDot />
                                </BrushRow>
                                <BrushTabs>
                                    {[0, 1, 2, 3, 4].map(k => <BrushTab key={k} $on={k === 0}><BrushIcon kind={k} /></BrushTab>)}
                                </BrushTabs>
                            </Section>
                            <Section>
                                <SectionTitle><TinyOpen />外観</SectionTitle>
                                <PropRows>
                                    <PropRow><PropLabel>Opacity</PropLabel><Field $light>100%</Field><Marker /></PropRow>
                                    <PropRow>
                                        <PropLabel>Visibility</PropLabel>
                                        <SelectField>Visible<SelectCaret><FaChevronDown /></SelectCaret></SelectField>
                                        <Marker />
                                    </PropRow>
                                    <PropRow><PropLabel>Effect</PropLabel><NewButton>新規作成</NewButton><Marker /></PropRow>
                                </PropRows>
                                <MoreRow $mt={3}><FaChevronDown /></MoreRow>
                            </Section>
                            <Section>
                                <SectionTitle><TinyOpen />共通</SectionTitle>
                                <PropRows>
                                    <PropRow>
                                        <PropLabel>Cursor</PropLabel>
                                        <SelectField><span /><SelectCaret><FaChevronDown /></SelectCaret></SelectField>
                                        <Marker />
                                    </PropRow>
                                    <PropRow><PropLabel>DataContext</PropLabel><NewButton>新規作成</NewButton><Marker /></PropRow>
                                    <PropRow><PropLabel>IsEnabled</PropLabel><CheckBox><FaCheck /></CheckBox><Marker /></PropRow>
                                    <PropRow><PropLabel>ToolTip</PropLabel><Field /><Marker /></PropRow>
                                </PropRows>
                                <MoreRow $mt={3}><FaChevronDown /></MoreRow>
                            </Section>
                            <Section>
                                <SectionTitle><TinyOpen />レイアウト</SectionTitle>
                                <PropRows>
                                    <PropRow $h={24}>
                                        <PropLabel>Width</PropLabel>
                                        <SizeEditor><SizeField>Auto (517)</SizeField><ExpandIcon /></SizeEditor>
                                        <Marker />
                                    </PropRow>
                                    <PropRow $h={24}>
                                        <PropLabel>Height</PropLabel>
                                        <SizeEditor><SizeField>Auto (320)</SizeField><ExpandIcon /></SizeEditor>
                                        <Marker />
                                    </PropRow>
                                    <PropRow $h={24}>
                                        <PropLabel>HorizontalAlignment</PropLabel>
                                        <AlignGroup>{horizontalIcons.map((d, i) => <AlignCell key={d} $on={i === 3}><AlignIcon d={d} dark={i === 3} /></AlignCell>)}</AlignGroup>
                                        <Marker />
                                    </PropRow>
                                    <PropRow $h={27}>
                                        <PropLabel>VerticalAlignment</PropLabel>
                                        <AlignGroup>{verticalIcons.map((d, i) => <AlignCell key={d} $on={i === 3}><AlignIcon d={d} dark={i === 3} /></AlignCell>)}</AlignGroup>
                                        <Marker />
                                    </PropRow>
                                    <PropRow $h={26}>
                                        <PropLabel>Margin</PropLabel>
                                        <MarginGrid>
                                            <MarginCell><MarginArrow><FaArrowLeft /></MarginArrow><MarginInput>0</MarginInput></MarginCell>
                                            <MarginCell><MarginArrow><FaArrowRight /></MarginArrow><MarginInput>0</MarginInput></MarginCell>
                                        </MarginGrid>
                                        <Marker $tall />
                                    </PropRow>
                                    <PropRow $h={22}>
                                        <span />
                                        <MarginGrid>
                                            <MarginCell><MarginArrow><FaArrowUp /></MarginArrow><MarginInput>0</MarginInput></MarginCell>
                                            <MarginCell><MarginArrow><FaArrowDown /></MarginArrow><MarginInput>0</MarginInput></MarginCell>
                                        </MarginGrid>
                                    </PropRow>
                                </PropRows>
                                <MoreRow $mt={5} $h={14}><FaChevronDown /></MoreRow>
                            </Section>
                            <Section><SectionTitle $h={23}><OutlineArrow />変換</SectionTitle></Section>
                            <Section><SectionTitle $h={23}><OutlineArrow />その他の指定</SectionTitle></Section>
                        </Sections>
                        <PropScroll><ArrowUp /><ArrowDown /></PropScroll>
                    </PropBody>
                </RightColumn>
            </Main>
            <Taskbar>
                <TaskItem $x={10} $w={30} $c="#8fb4e8" $r={15} />
                <TaskItem $x={90} $w={12} $t={1} $c="#d8b030" />
                <TaskItem $x={198} $w={30} $t={1} $c="#cfe6f6" />
                <TaskItem $x={270} $w={16} $t={2} $c="#8a8a92" />
                <TaskItem $x={323} $w={27} $t={1} $c="#cde8c8" />
                <TaskItem $x={385} $w={26} $t={1} $c="#e8d080" />
                <TaskItem $x={432} $w={58} $c="#a8a4b4" />
                <TaskItem $x={494} $w={58} $c="#a8a4b4" />
                <TaskItem $x={556} $w={57} $c="#a8a4b4" />
                <TaskItem $x={618} $w={58} $c="#d4d2dc" />
                <TaskItem $x={1208} $w={58} $c="#8a8496" $r={6} />
                <TaskItem $x={1232} $w={12} $t={2} $c="#d86a6a" $r={6} />
                <TaskItem $x={1268} $w={104} $c="#6a6480" $r={6} />
                <TaskItem $x={1527} $w={14} $t={5} $c="#e8e8e8" />
                <TaskItem $x={1587} $w={13} $c="#7c7c8c" />
            </Taskbar>
        </Page>
    )
}

export default App
